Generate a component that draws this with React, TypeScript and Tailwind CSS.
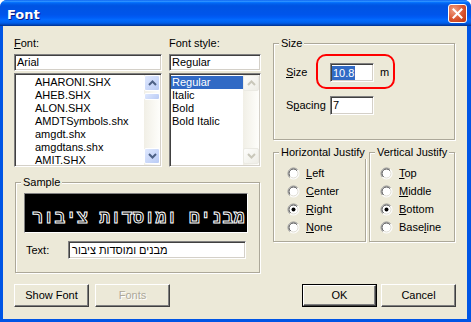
import React from "react";

const sunken =
  "border border-t-[#808080] border-l-[#808080] border-b-white border-r-white shadow-[inset_1px_1px_0_#404040,inset_-1px_-1px_0_#d4d0c8]";

function Arrow({ up, color }: { up?: boolean; color: string }) {
  return (
    <svg width="9" height="6" viewBox="0 0 9 6">
      <polyline
        points={up ? "1,5 4.5,1.5 8,5" : "1,1 4.5,4.5 8,1"}
        fill="none"
        stroke={color}
        strokeWidth="2"
      />
    </svg>
  );
}

function ScrollBar({ disabled }: { disabled?: boolean }) {
  const btn = disabled
    ? "border-[#ebeae3] bg-[linear-gradient(135deg,#fdfdfb,#eeede6)]"
    : "border-white bg-[linear-gradient(135deg,#dfe8fe,#b9cbf5)]";
  const arrow = disabled ? "#c9c7ba" : "#4d6185";
  return (
    <div className="w-[16px] h-full flex flex-col bg-[linear-gradient(to_right,#f1efe6,#fefefb)]">
      <div className={`h-[16px] rounded-[2px] border flex items-center justify-center ${btn}`}>
        <Arrow up color={arrow} />
      </div>
      {!disabled && <div className={`mt-[2px] h-[7px] rounded-[2px] border ${btn}`} />}
      <div className="flex-1" />
      <div className={`h-[16px] mb-[1px] rounded-[2px] border flex items-center justify-center ${btn}`}>
        <Arrow color={arrow} />
      </div>
    </div>
  );
}

function Radio({ checked }: { checked?: boolean }) {
  return (
    <svg width="13" height="13" viewBox="0 0 13 13" className="shrink-0">
      <defs>
        <linearGradient id="rOut" x1="0" y1="0" x2="1" y2="1">
          <stop offset="0.5" stopColor="#8c8c8c" />
          <stop offset="0.5" stopColor="#ffffff" />
        </linearGradient>
        <linearGradient id="rIn" x1="0" y1="0" x2="1" y2="1">
          <stop offset="0.5" stopColor="#505050" />
          <stop offset="0.5" stopColor="#dcdad0" />
        </linearGradient>
      </defs>
      <circle cx="6.5" cy="6.5" r="5.5" fill="white" stroke="url(#rOut)" />
      <circle cx="6.5" cy="6.5" r="4.5" fill="white" stroke="url(#rIn)" />
      {checked && <circle cx="6.5" cy="6.5" r="2" fill="black" />}
    </svg>
  );
}

function Group({ label, className, children }: { label: string; className: string; children?: React.ReactNode }) {
  return (
    <div className={`relative border border-[#aca899] shadow-[inset_1px_1px_0_white,1px_1px_0_white] ${className}`}>
      <span className="absolute -top-[7px] left-[5px] px-[2px] bg-[#ece9d8] leading-[13px] whitespace-nowrap">{label}</span>
      {children}
    </div>
  );
}

function Btn({ label, def, disabled, className = "" }: { label: string; def?: boolean; disabled?: boolean; className?: string }) {
  return (
    <div className={`w-[75px] h-[23px] ${def ? "border border-black" : ""} ${className}`}>
      <div className="w-full h-full border border-t-white border-l-white border-r-[#404040] border-b-[#404040] shadow-[inset_-1px_-1px_0_#808080] flex items-center justify-center">
        <span className={disabled ? "text-[#aca899] [text-shadow:1px_1px_0_white]" : ""}>{label}</span>
      </div>
    </div>
  );
}

function RadioRow({ pre, key_, post, checked }: { pre: string; key_: string; post: string; checked?: boolean }) {
  return (
    <div className="h-[18px] flex items-center">
      <Radio checked={checked} />
      <span className="ml-[6px] leading-[13px]">
        {pre}
        <span className="underline">{key_}</span>
        {post}
      </span>
    </div>
  );
}

const fonts = ["AHARONI.SHX", "AHEB.SHX", "ALON.SHX", "AMDTSymbols.shx", "amgdt.shx", "amgdtans.shx", "AMIT.SHX"];
const styles = ["Regular", "Italic", "Bold", "Bold Italic"];

export default function App() {
  return (
    <div className="w-[471px] h-[322px] flex flex-col bg-[#0055e5] rounded-t-[7px] overflow-hidden font-['Liberation_Sans',Arial,sans-serif] text-[11px] text-black">
      {/* title bar */}
      <div className="h-[26px] shrink-0 flex items-center pl-[7px] pr-[4px] bg-[linear-gradient(to_bottom,#0058ee_0%,#3593ff_4%,#288eff_6%,#127dff_8%,#036ffc_10%,#0262ee_14%,#0057e5_20%,#0054e3_24%,#0055eb_56%,#005bf5_66%,#026afe_76%,#0062ef_86%,#0052d6_92%,#0040ab_96%,#003092_100%)]">
        <span className="pt-[3px] font-['DejaVu_Sans',sans-serif] font-bold text-[13px] text-white [text-shadow:1px_1px_0_#0a1883]">
          Font
        </span>
        <div className="ml-auto mt-[1px] w-[19px] h-[19px] rounded-[3px] border border-white bg-[radial-gradient(circle_at_30%_30%,#f0a085,#d9542f_55%,#b83513)] flex items-center justify-center">
          <svg width="11" height="11" viewBox="0 0 11 11">
            <path d="M1.5 1.5 L9.5 9.5 M9.5 1.5 L1.5 9.5" stroke="white" strokeWidth="2" strokeLinecap="square" />
          </svg>
        </div>
      </div>

      {/* body */}
      <div className="ml-[3px] mr-[4px] mb-[3px] flex-1 bg-[#ece9d8] pl-[11px] flex flex-col">
        <div className="h-[247px] flex">
          {/* left column */}
          <div className="w-[247px] flex flex-col">
            <div className="flex gap-[7px]">
              <div className="w-[148px] flex flex-col">
                <div className="mt-[11px] h-[13px] leading-[13px]">
                  <span className="underline">F</span>ont:
                </div>
                <div className={`mt-[4px] h-[17px] bg-white pl-[2px] leading-[15px] ${sunken}`}>Arial</div>
                <div className={`mt-[2px] h-[94px] bg-white flex p-[1px] ${sunken}`}>
                  <div className="flex-1 overflow-hidden pl-[19px] pt-[1px]">
                    {fonts.map((f) => (
                      <div key={f} className="h-[13px] leading-[13px] whitespace-nowrap">
                        {f}
                      </div>
                    ))}
                  </div>
                  <ScrollBar />
                </div>
              </div>
              <div className="w-[92px] flex flex-col">
                <div className="mt-[11px] h-[13px] leading-[13px]">Font style:</div>
                <div className={`mt-[4px] h-[17px] bg-white pl-[2px] leading-[15px] ${sunken}`}>Regular</div>
                <div className={`mt-[2px] h-[94px] bg-white flex p-[1px] ${sunken}`}>
                  <div className="flex-1 overflow-hidden pt-[1px]">
                    {styles.map((s, i) => (
                      <div
                        key={s}
                        className={`h-[13px] leading-[13px] pl-[1px] whitespace-nowrap ${i === 0 ? "bg-[#316ac5] text-white" : ""}`}
                      >
                        {s}
                      </div>
                    ))}
                  </div>
                  <ScrollBar disabled />
                </div>
              </div>
            </div>

            <Group label="Sample" className="mt-[15px] ml-[1px] w-[245px] h-[91px] pl-[8px] pt-[10px]">
              <div className="w-[224px] h-[40px] bg-black border border-t-[#808080] border-l-[#808080] border-b-white border-r-white flex items-end justify-end pr-[2px] pb-[4px] overflow-hidden">
                <span
                  dir="rtl"
                  className="font-['Liberation_Mono','DejaVu_Sans_Mono',monospace] font-bold text-[18px] leading-[20px] tracking-[0.4px] text-transparent [-webkit-text-stroke:1px_white] whitespace-nowrap"
                >
                  מבנים ומוסדות ציבור
                </span>
              </div>
              <div className="mt-[8px] flex items-center">
                <span className="w-[44px] pl-[2px]">Text:</span>
                <div className={`w-[178px] h-[18px] bg-white pl-[3px] leading-[16px] ${sunken}`}>
                  מבנים ומוסדות ציבור
                </div>
              </div>
            </Group>
          </div>

          {/* right column */}
          <div className="ml-[12px] flex flex-col">
            <Group label="Size" className="mt-[17px] w-[182px] h-[97px] pl-[12px] pt-[19px]">
              <div className="flex items-center h-[19px]">
                <span className="w-[44px]">
                  <span className="underline">S</span>ize
                </span>
                <div className={`w-[44px] h-[19px] bg-white pl-[1px] flex items-center ${sunken}`}>
                  <span className="bg-[#316ac5] text-white leading-[14px] px-[1px]">10.8</span>
                </div>
                <span className="ml-[6px]">m</span>
              </div>
              <div className="mt-[14px] flex items-center h-[19px]">
                <span className="w-[44px]">
                  S<span className="underline">p</span>acing
                </span>
                <div className={`w-[44px] h-[19px] bg-white pl-[2px] leading-[17px] ${sunken}`}>7</div>
              </div>
              <div className="absolute left-[42px] top-[10px] w-[79px] h-[35px] border-2 border-[#ff0000] rounded-[10px]" />
            </Group>

            <div className="mt-[12px] flex gap-[3px]">
              <Group label="Horizontal Justify" className="w-[93px] h-[90px] pl-[13px] pt-[11px]">
                <RadioRow pre="" key_="L" post="eft" />
                <RadioRow pre="" key_="C" post="enter" />
                <RadioRow pre="" key_="R" post="ight" checked />
                <RadioRow pre="" key_="N" post="one" />
              </Group>
              <Group label="Vertical Justify" className="w-[86px] h-[90px] pl-[10px] pt-[11px]">
                <RadioRow pre="" key_="T" post="op" />
                <RadioRow pre="" key_="M" post="iddle" />
                <RadioRow pre="" key_="B" post="ottom" checked />
                <RadioRow pre="Base" key_="l" post="ine" />
              </Group>
            </div>
          </div>
        </div>

        {/* buttons */}
        <div className="mt-[11px] flex">
          <Btn label="Show Font" />
          <Btn label="Fonts" disabled className="ml-[6px]" />
          <Btn label="OK" def className="ml-[132px]" />
          <Btn label="Cancel" className="ml-[4px]" />
        </div>
      </div>
    </div>
  );
}
